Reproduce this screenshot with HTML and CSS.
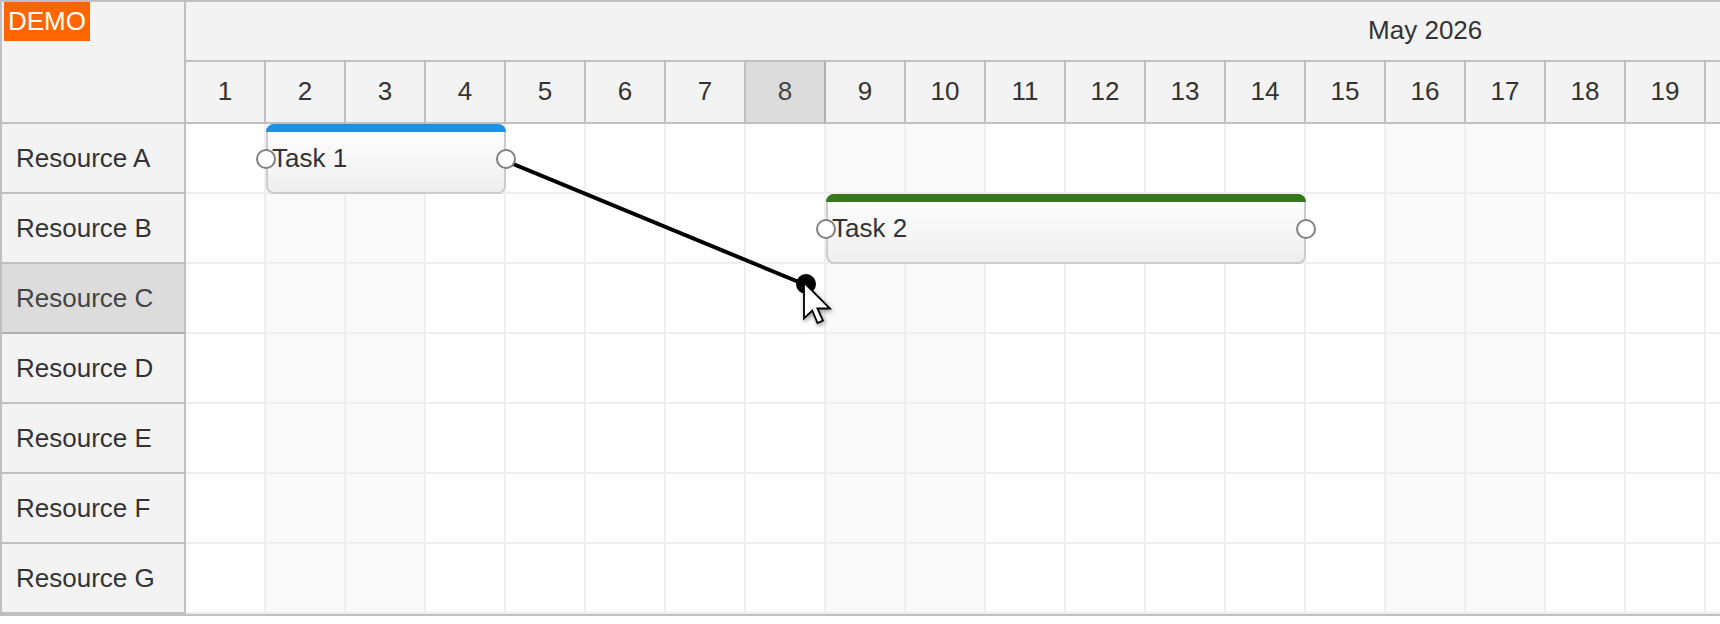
FILE: index.html
```
<!DOCTYPE html>
<html lang="en">
<head>
    <meta charset="UTF-8">
    <meta name="viewport" content="width=device-width, initial-scale=1.0">
    <title>Scheduler</title>
    <link rel="stylesheet" href="styles.css">
</head>
<body>

    <div class="scheduler">
        <div class="demo">DEMO</div>
        <table class="timeline">
            <colgroup>
                <col class="resource-col">
                <col class="day-col" span="31">
            </colgroup>
            <thead>
                <tr class="month-row">
                    <th class="corner" rowspan="2"></th>
                    <th colspan="31">May 2026</th>
                </tr>
                <tr class="day-row" id="days"></tr>
            </thead>
            <tbody id="rows"></tbody>
        </table>

        <!-- link being dragged from Task 1 -->
        <svg class="link" width="1000" height="400" viewBox="0 0 1000 400">
            <line x1="504" y1="159" x2="804" y2="283" stroke="#000" stroke-width="4"/>
            <circle cx="804" cy="282" r="10" fill="#000"/>
        </svg>
        <svg class="cursor" width="32" height="46" viewBox="0 0 32 46">
            <path d="M2 2.5V38.5L10.3 30.5L15.5 43L21 40.6L15.4 28.5H28Z" fill="#fff" stroke="#000" stroke-width="1.8"/>
        </svg>
    </div>

    <script>
        const dayCount = 31;
        const dayWidth = 80;
        const currentDay = 8;
        const currentResource = 'C';
        const resources = ['A', 'B', 'C', 'D', 'E', 'F', 'G'];
        const tasks = [
            { text: 'Task 1', resource: 'A', start: 2, days: 3, color: 'blue' },
            { text: 'Task 2', resource: 'B', start: 9, days: 6, color: 'green' }
        ];

        function isWeekend(day) {
            const weekday = new Date(2026, 4, day).getDay();
            return weekday === 0 || weekday === 6;
        }

        function createTask(task) {
            const element = document.createElement('div');
            element.className = 'task ' + task.color;
            element.style.width = task.days * dayWidth + 'px';
            element.innerHTML = '<span class="point start"></span>' + task.text + '<span class="point end"></span>';
            return element;
        }

        const daysElement = document.getElementById('days');
        for (let day = 1; day <= dayCount; day++) {
            const th = document.createElement('th');
            th.textContent = day;
            th.classList.toggle('active', day === currentDay);
            daysElement.appendChild(th);
        }

        const rowsElement = document.getElementById('rows');
        resources.forEach(function (resource) {
            const tr = document.createElement('tr');
            const th = document.createElement('th');
            th.textContent = 'Resource ' + resource;
            th.classList.toggle('active', resource === currentResource);
            tr.appendChild(th);
            for (let day = 1; day <= dayCount; day++) {
                const td = document.createElement('td');
                td.classList.toggle('weekend', isWeekend(day));
                const task = tasks.find(t => t.resource === resource && t.start === day);
                if (task) {
                    td.appendChild(createTask(task));
                }
                tr.appendChild(td);
            }
            rowsElement.appendChild(tr);
        });
    </script>

</body>
</html>
```

FILE: styles.css
```
* {
    box-sizing: border-box;
}

body {
    margin: 0;
    font-family: "Liberation Sans", Arial, sans-serif;
    font-size: 26px;
    line-height: 30px;
    color: #333;
    background-color: #fff;
}

.scheduler {
    position: relative;
    overflow: hidden;
    border: 2px solid #c0c0c0;
    border-right: none;
}

.demo {
    position: absolute;
    top: 0;
    left: 2px;
    padding: 4px 4px 5px;
    color: #fff;
    background-color: #ff6600;
}

.timeline {
    width: 2664px;
    table-layout: fixed;
    border-collapse: separate;
    border-spacing: 0;
}

.resource-col {
    width: 184px;
}

.day-col {
    width: 80px;
}

th {
    padding: 0;
    font-weight: normal;
    text-align: center;
    background-color: #f3f3f3;
    border-right: 2px solid #c0c0c0;
    border-bottom: 2px solid #c0c0c0;
}

thead th {
    padding-bottom: 2px;
}

th.active {
    color: #444;
    background-color: #dcdcdc;
}

.day-row th.active {
    border-right-color: #b0b0b0;
}

.month-row {
    height: 60px;
}

.day-row {
    height: 62px;
}

tbody tr {
    height: 70px;
}

tbody th {
    padding-left: 14px;
    text-align: left;
}

tbody th.active {
    border-bottom-color: #b0b0b0;
}

td {
    position: relative;
    padding: 0;
    border-right: 2px solid #eee;
    border-bottom: 2px solid #eee;
}

td.weekend {
    background-color: #f9f9f9;
}

.task {
    position: absolute;
    top: 0;
    left: 0;
    z-index: 1;
    height: 70px;
    padding-left: 4px;
    line-height: 64px;
    border: 2px solid #ccc;
    border-radius: 8px;
    background: linear-gradient(to bottom, #fff, #eee);
}

/* Colored bar at the top of the task */
.task::before {
    content: "";
    position: absolute;
    top: -2px;
    left: -2px;
    right: -2px;
    height: 8px;
    border-radius: 8px 8px 0 0;
}

.blue::before {
    background-color: #1e90e6;
}

.green::before {
    background-color: #38761d;
}

.point {
    position: absolute;
    top: 23px;
    width: 20px;
    height: 20px;
    border: 2px solid #808080;
    border-radius: 50%;
    background-color: #fff;
}

.start {
    left: -12px;
}

.end {
    right: -12px;
}

.link {
    position: absolute;
    top: 0;
    left: 0;
    pointer-events: none;
}

.cursor {
    position: absolute;
    top: 278px;
    left: 800px;
    z-index: 2;
    filter: drop-shadow(1px 2px 2px rgba(0, 0, 0, 0.4));
}
```
